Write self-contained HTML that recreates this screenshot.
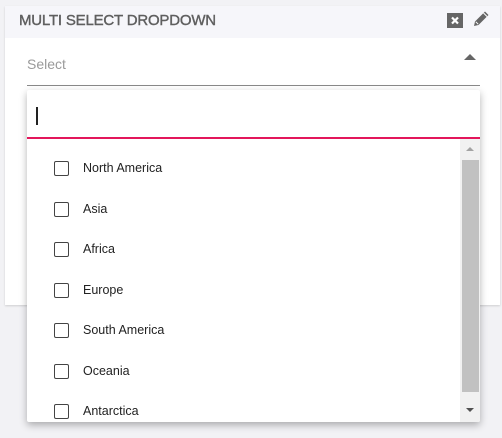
<!DOCTYPE html>
<html><head><style>
body{margin:0;width:502px;height:438px;background:#f2f2f5;font-family:"Liberation Sans",sans-serif;position:relative;overflow:hidden}
.card{position:absolute;left:5px;top:6px;width:495px;height:299px;background:#fff;box-shadow:0 1px 2px rgba(0,0,0,.15)}
.hdr{position:absolute;left:0;top:0;right:0;height:32px;background:#f6f6fa}
.title{position:absolute;left:14px;top:6px;font-size:15px;color:#5f5f5f;letter-spacing:-0.2px;-webkit-text-stroke:0.4px #5f5f5f}
.sel{position:absolute;left:22px;top:50px;font-size:14px;color:#9a9a9a}
.line{position:absolute;left:22px;top:79px;width:453px;height:1px;background:#8a8a8a}
.arrow{position:absolute;left:459px;top:48px;width:0;height:0;border-left:6px solid transparent;border-right:6px solid transparent;border-bottom:6px solid #666}
.pop{position:absolute;left:27px;top:90px;width:453px;height:332px;background:#fff;box-shadow:0 3px 8px rgba(0,0,0,.3);border-radius:2px;overflow:hidden}
.search{position:absolute;left:0;top:0;right:0;height:47px}
.pink{position:absolute;left:0;right:0;top:47px;height:2px;background:#e3165b}
.caret{position:absolute;left:9px;top:17px;width:2px;height:18px;background:#222}
.sb{position:absolute;left:433px;top:49px;width:20px;height:283px;background:#f1f1f1}
.thumb{position:absolute;left:2px;top:21px;width:17px;height:232px;background:#c1c1c1}
.item{position:absolute;left:27px;height:16px;font-size:12.5px;color:#222}
.cb{position:absolute;left:0;top:0;width:13px;height:13px;border:1.5px solid #444;border-radius:2px}
.item span{position:absolute;left:29px;top:0px;white-space:nowrap}
</style></head><body>
<div class="card">
 <div class="hdr">
  <div class="title">MULTI SELECT DROPDOWN</div>
  <svg style="position:absolute;left:441px;top:5px" width="18" height="18"><rect x="1" y="2" width="16" height="15" fill="#666"/><path d="M6 6.5L12 12.5M12 6.5L6 12.5" stroke="#fff" stroke-width="2.2"/></svg>
  <svg style="position:absolute;left:466px;top:3px" width="20" height="20"><path d="M3 17L4 12.5L14 2.5L17.5 6L7.5 16Z" fill="#666"/><path d="M4.8 12.8L7.2 15.2M12.5 4L16 7.5" stroke="#fff" stroke-width="1"/></svg>
 </div>
 <div class="sel">Select</div>
 <div class="arrow"></div>
 <div class="line"></div>
</div>
<div class="pop">
 <div class="search"><div class="caret"></div></div>
 <div class="pink"></div>
 <div class="item" style="top:71px"><div class="cb"></div><span>North America</span></div>
 <div class="item" style="top:112px"><div class="cb"></div><span>Asia</span></div>
 <div class="item" style="top:152px"><div class="cb"></div><span>Africa</span></div>
 <div class="item" style="top:193px"><div class="cb"></div><span>Europe</span></div>
 <div class="item" style="top:233px"><div class="cb"></div><span>South America</span></div>
 <div class="item" style="top:274px"><div class="cb"></div><span>Oceania</span></div>
 <div class="item" style="top:314px"><div class="cb"></div><span>Antarctica</span></div>
 <div class="sb">
  <div style="position:absolute;left:6px;top:8px;border-left:4px solid transparent;border-right:4px solid transparent;border-bottom:4px solid #a3a3a3"></div>
  <div class="thumb"></div>
  <div style="position:absolute;left:6px;top:269px;border-left:4px solid transparent;border-right:4px solid transparent;border-top:4px solid #505050"></div>
 </div>
</div>
</body></html>
